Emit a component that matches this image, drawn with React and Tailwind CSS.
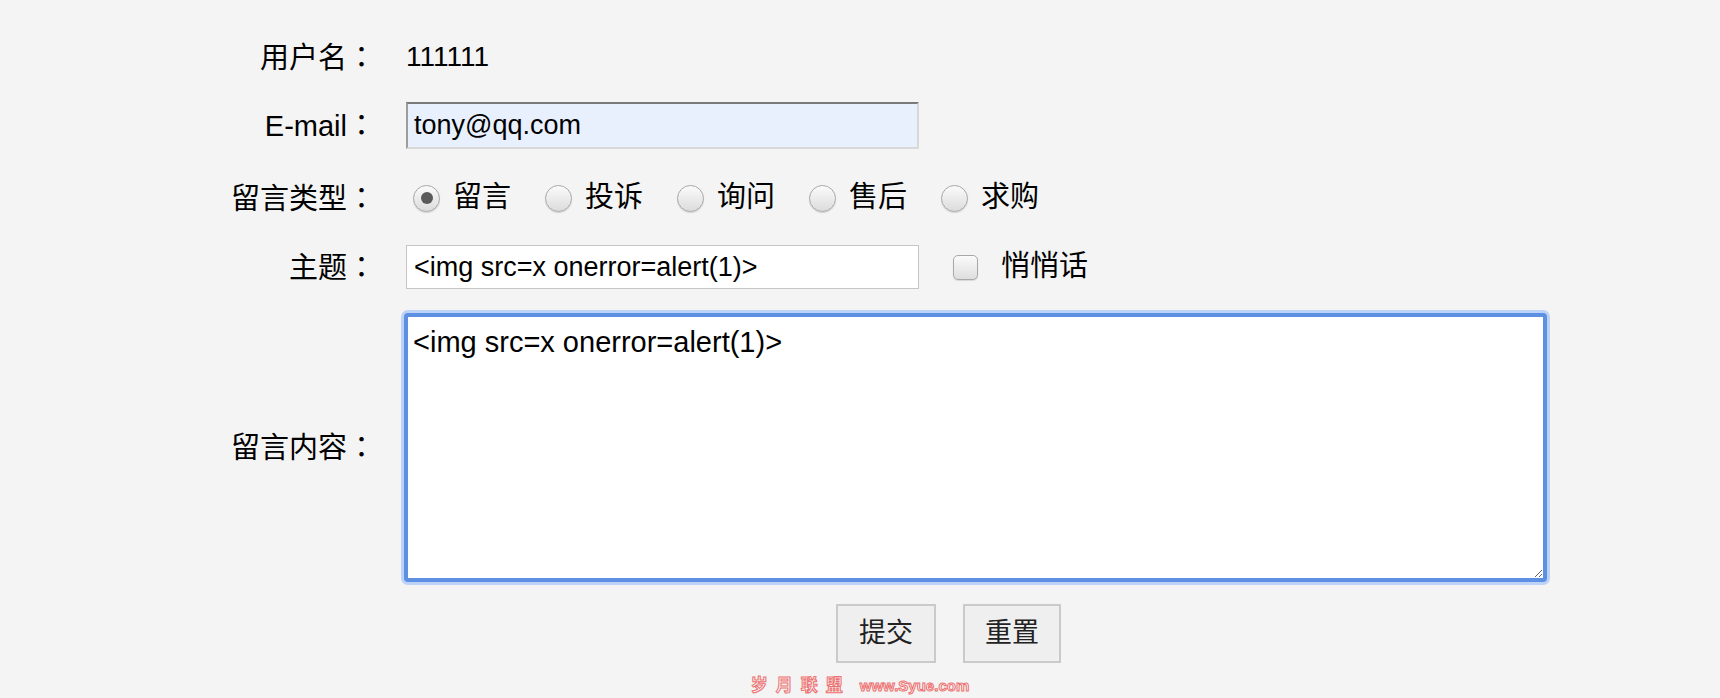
function Radio({ checked }) {
  return (
    <span className="ml-[7px] mr-[13px] flex h-[27px] w-[27px] items-center justify-center rounded-full border border-[#a8a8a8] bg-gradient-to-b from-[#fbfbfb] to-[#dcdcdc] shadow-[0_1px_1px_rgba(0,0,0,0.15)]">
      {checked && <span className="h-[12px] w-[12px] rounded-full bg-[#5a5a5a]" />}
    </span>
  );
}

function Row({ label, className, children }) {
  return (
    <div className={`flex items-center ${className}`}>
      <div className="w-[376px] shrink-0 text-right text-[29px] text-black">
        {label}
        <span className="font-['Noto_Sans_CJK_JP',sans-serif]">：</span>
      </div>
      <div className="ml-[30px] flex flex-1 items-center">{children}</div>
    </div>
  );
}

export default function App() {
  const types = ['留言', '投诉', '询问', '售后', '求购'];

  return (
    <div className="min-h-screen overflow-hidden bg-[#f4f4f4] pt-[33px] font-['Liberation_Sans','Noto_Sans_CJK_SC',sans-serif]">
      <Row label="用户名" className="h-[48px]">
        <span className="text-[28px] text-black">111111</span>
      </Row>

      <Row label="E-mail" className="mt-[21px] h-[47px]">
        <input
          readOnly
          defaultValue="tony@qq.com"
          className="h-[47px] w-[513px] border-2 border-t-[#7b7b7b] border-l-[#9c9c9c] border-r-[#d8d8d8] border-b-[#d8d8d8] bg-[#e8f0fe] px-[6px] text-[27px] text-black outline-none"
        />
      </Row>

      <Row label="留言类型" className="mt-[27px] h-[44px]">
        <div className="flex items-center gap-[27px]">
          {types.map((t, i) => (
            <div key={t} className="flex items-center">
              <Radio checked={i === 0} />
              <span className="text-[29px] text-black">{t}</span>
            </div>
          ))}
        </div>
      </Row>

      <Row label="主题" className="mt-[25px] h-[44px]">
        <input
          readOnly
          defaultValue="<img src=x onerror=alert(1)>"
          className="h-[44px] w-[513px] border border-[#c6c6c6] bg-white px-[7px] text-[27px] text-black outline-none"
        />
        <span className="ml-[34px] mr-[23px] h-[25px] w-[25px] rounded-[5px] border border-[#a8a8a8] bg-gradient-to-b from-[#fbfbfb] to-[#dedede] shadow-[0_1px_1px_rgba(0,0,0,0.12)]" />
        <span className="text-[29px] text-black">悄悄话</span>
      </Row>

      <Row label="留言内容" className="mt-[24px] h-[269px]">
        <textarea
          readOnly
          defaultValue="<img src=x onerror=alert(1)>"
          className="-ml-[2px] h-[269px] w-[1143px] rounded-[4px] border-4 border-[#5d8fe3] bg-white px-[5px] py-[8px] text-[29px] leading-[34px] text-black shadow-[0_0_0_3px_#bcd2f6] outline-none"
        />
      </Row>

      <div className="mt-[22px] flex">
        <div className="ml-[406px] flex w-[1085px] justify-center gap-[27px]">
          <button className="h-[59px] w-[100px] border-2 border-[#cacaca] bg-[#efefef] text-[27px] text-[#222]">提交</button>
          <button className="h-[59px] w-[98px] border-2 border-[#cacaca] bg-[#efefef] text-[27px] text-[#222]">重置</button>
        </div>
      </div>

      <div className="mt-[13px] flex justify-center text-transparent [-webkit-text-stroke:1px_#ee7070]">
        <div className="flex items-center gap-[8px] text-[17px] font-bold leading-[20px]">
          <span>岁</span>
          <span>月</span>
          <span>联</span>
          <span>盟</span>
        </div>
        <span className="ml-[17px] text-[15px] font-bold leading-[20px]">www.Syue.com</span>
      </div>
    </div>
  );
}
